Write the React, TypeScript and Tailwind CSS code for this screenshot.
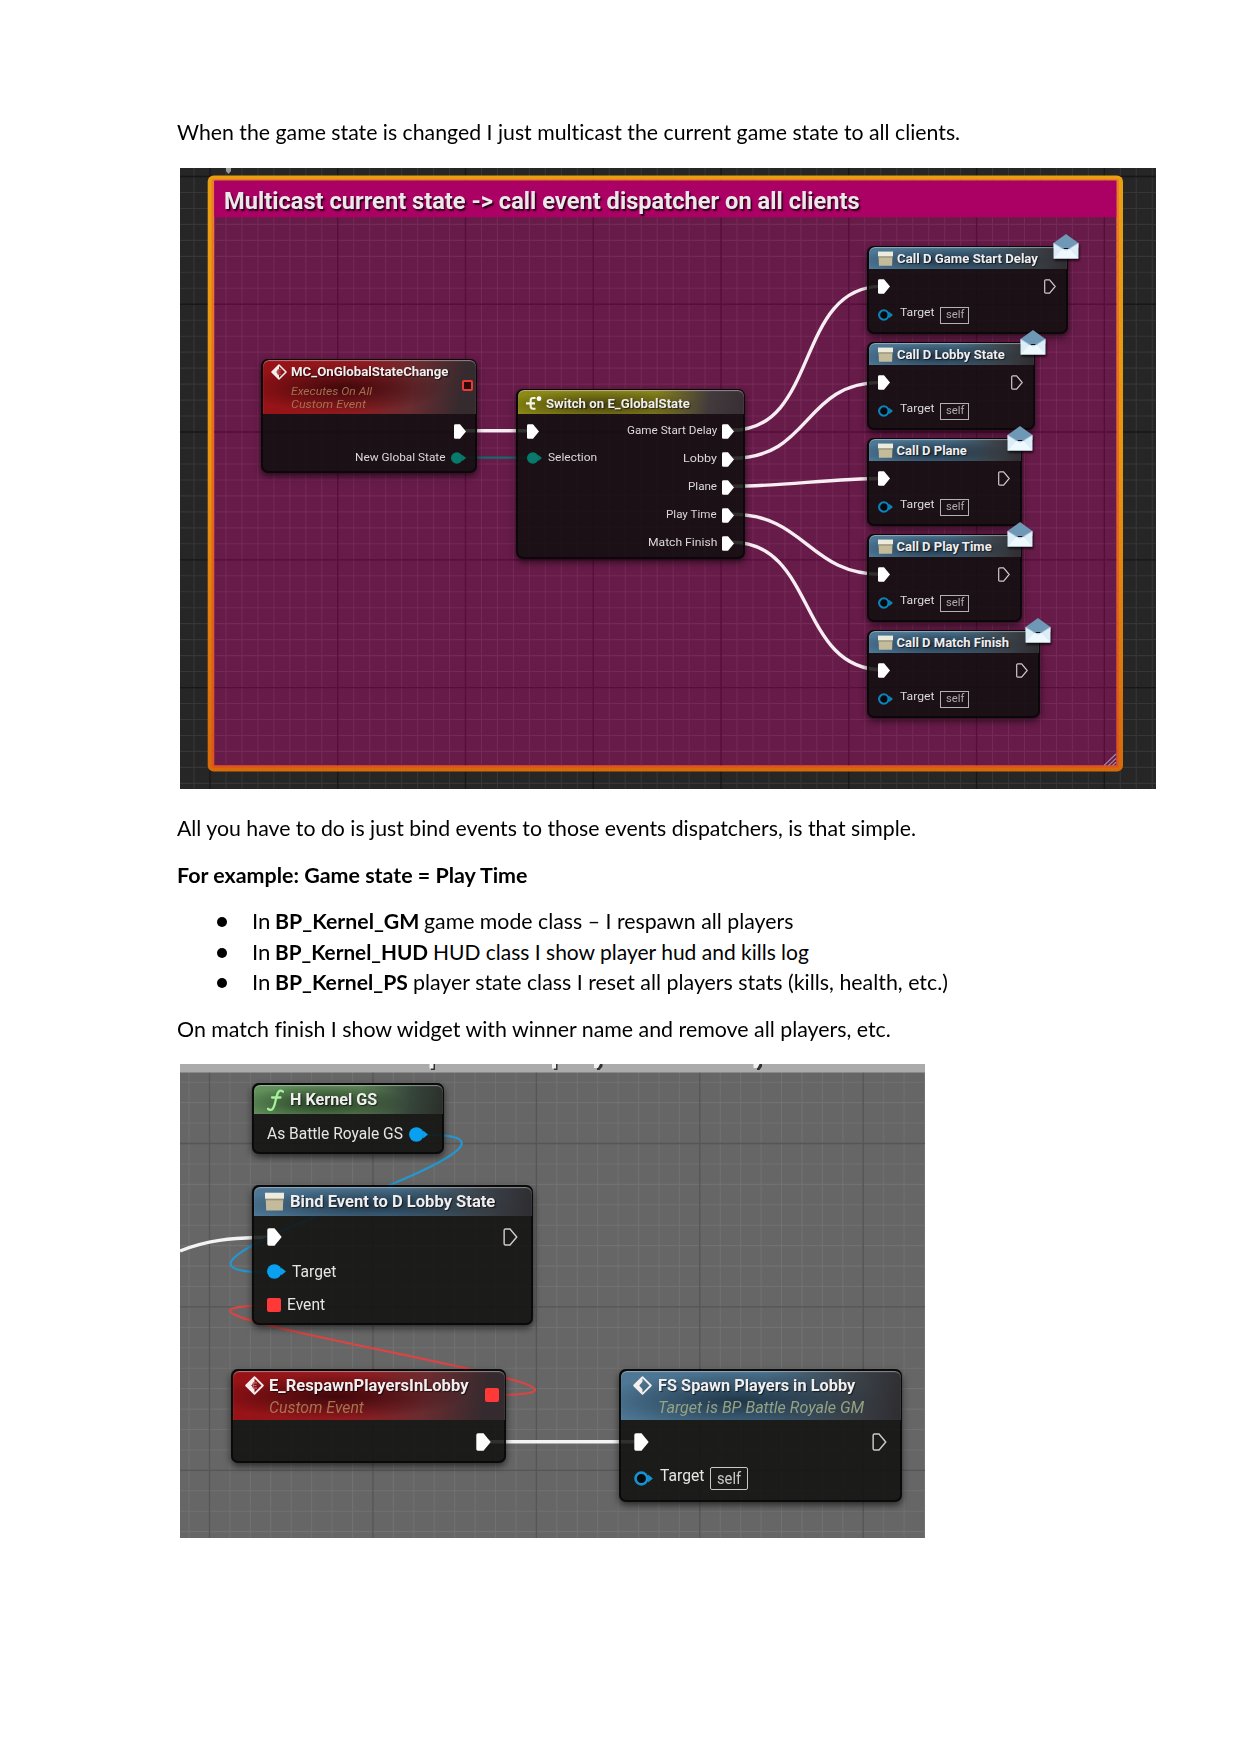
import React, { useLayoutEffect, useRef, useState } from "react";

/* Text condensed or widened horizontally to an exact width. */
function Fit({ w, className = "", children }: { w: number; className?: string; children: React.ReactNode }) {
  const ref = useRef<HTMLSpanElement>(null);
  const [k, setK] = useState(1);
  useLayoutEffect(() => {
    const measure = () => {
      if (ref.current) setK(w / ref.current.offsetWidth);
    };
    measure();
    document.fonts.ready.then(measure);
  }, [w]);
  return (
    <span className="inline-block shrink-0 whitespace-pre" style={{ width: w }}>
      <span ref={ref} className={`inline-block origin-left ${className}`} style={{ transform: `scaleX(${k})` }}>
        {children}
      </span>
    </span>
  );
}

function ExecPin({ open = false, big = false }: { open?: boolean; big?: boolean }) {
  return (
    <svg viewBox="0 0 12 15" className={`shrink-0 ${big ? "w-[15px] h-[18px]" : "w-[12px] h-[15px]"}`}>
      <path
        d={open ? "M.7 2Q.7.9 1.8.9H5.6L11.2 7.5 5.6 14.1H1.8Q.7 14.1.7 13Z" : "M0 1.6Q0 .2 1.4.2H6L12 7.5 6 14.8H1.4Q0 14.8 0 13.4Z"}
        fill={open ? "none" : "#fff"}
        stroke={open ? "#cfcacb" : "none"}
        strokeWidth="1.2"
      />
    </svg>
  );
}

function DataPin({ color, open = false, big = false }: { color: string; open?: boolean; big?: boolean }) {
  return (
    <svg viewBox="0 0 15 12" className={`shrink-0 ${big ? "w-[19px] h-[15px]" : "w-[15px] h-[12px]"}`}>
      <circle cx="5.8" cy="6" r={open ? 4.7 : 5.8} fill={open ? "#08090c" : color} stroke={open ? color : "none"} strokeWidth="2.1" />
      <path d="M11.2 2.800 15 6 11.200 9.200Z" fill={color} />
    </svg>
  );
}

function BoxIcon({ className }: { className: string }) {
  return (
    <svg viewBox="0 0 16 16" className={`shrink-0 ${className}`}>
      <path d="M.6 5.5H15.4L15 15.6H1Z" fill="#c3bb9c" />
      <path d="M.8 5.500H15.200V7H.8Z" fill="#968f75" />
      <path d="M0 .6H16V5.600H0Z" fill="#ecebdc" />
    </svg>
  );
}

function EventIcon({ className, call = false }: { className: string; call?: boolean }) {
  return (
    <svg viewBox="0 0 20 20" className={`shrink-0 ${className}`}>
      <path d="M10 1.2 18.8 10 10 18.8 1.2 10Z" fill="none" stroke="#f5eeee" strokeWidth="1.9" strokeLinejoin="round" />
      <path d="M10 1.2 1.2 10 10 18.8V14L6.6 10 10 6Z" fill="#f5eeee" />
      {!call && <path d="M8.400 7.200H12.600M8.400 10H12M8.400 12.800H12.600M8.600 7V13" stroke="#c06a6a" strokeWidth="1.200" fill="none" />}
    </svg>
  );
}

function SwitchIcon() {
  return (
    <svg viewBox="0 0 17 15" className="w-[17px] h-[15px] shrink-0">
      <path d="M9.5 2H7Q4.7 2 4.7 4.2V10.6Q4.7 12.7 7 12.7H9.5M0 7.4H9" stroke="#f3f3e6" strokeWidth="2.1" fill="none" />
      <circle cx="13" cy="2.700" r="2.400" fill="#fff" />
    </svg>
  );
}

function Envelope() {
  return (
    <svg viewBox="0 0 26 26" className="absolute -top-[12px] -right-[11px] w-[26px] h-[26px] overflow-visible drop-shadow-[1px_2px_1px_rgba(0,0,0,0.7)]">
      <path d="M13 0 25.5 9V14H.5V9Z" fill="#6f97b6" />
      <path d="M.5 9 10 15H16L25.5 9V24.5H.5Z" fill="#dcedf8" />
      <path d="M.5 24.5 10 14.6 13 16 16 14.6 25.5 24.5Z" fill="#eef8ff" />
      <path d="M.8 9.2 10 14.8 13 16.2 16 14.8 25.2 9.2" stroke="#a9c3d6" strokeWidth=".8" fill="none" />
    </svg>
  );
}

/* Graph-paper lines through (ox, oy): every eighth line is a major one. */
function Grid(p: { x: number; y: number; w: number; h: number; ox: number; oy: number; step: number; minor: string; major: string }) {
  const minor: string[] = [];
  const major: string[] = [];
  for (let i = -80; i <= 80; i++) {
    const gx = p.ox + i * p.step;
    const gy = p.oy + i * p.step;
    const out = i % 8 === 0 ? major : minor;
    if (gx > p.x && gx < p.x + p.w) out.push(`M${gx} ${p.y}v${p.h}`);
    if (gy > p.y && gy < p.y + p.h) out.push(`M${p.x} ${gy}h${p.w}`);
  }
  return (
    <g fill="none">
      <path d={minor.join("")} stroke={p.minor} strokeWidth="1.1" />
      <path d={major.join("")} stroke={p.major} strokeWidth="1.3" />
    </g>
  );
}

const SHELL =
  "absolute rounded-[7px] bg-[rgba(15,15,13,0.86)] shadow-[0_3px_7px_rgba(0,0,0,0.6),inset_0_0_0_2px_rgba(5,5,5,0.75)] text-[#dcd8da]";
const HEAD =
  "flex mx-[1.5px] rounded-t-[6px] shadow-[inset_0_1px_1px_rgba(220,225,230,0.5)]";
const TITLE = "font-bold text-[#f0eeef] [text-shadow:1px_1px_1px_rgba(0,0,0,0.6)]";

const BLUE =
  "bg-[radial-gradient(ellipse_50%_60%_at_42%_62%,rgba(18,34,48,0.75),rgba(18,34,48,0)),linear-gradient(100deg,#4e7896_0%,#496f8b_50%,#3c444b_80%,#2e2c30_100%)]";
const RED =
  "bg-[radial-gradient(ellipse_48%_45%_at_38%_52%,rgba(50,5,8,0.85),rgba(50,5,8,0)),linear-gradient(100deg,#981216_0%,#8e1a1f_45%,#6a2c30_70%,#352a2e_92%)]";
const OLIVE =
  "bg-[radial-gradient(ellipse_45%_60%_at_36%_62%,rgba(45,42,8,0.75),rgba(45,42,8,0)),linear-gradient(100deg,#8d8a14_0%,#85801c_60%,#423a3c_84%,#382e34_100%)]";
const GREEN =
  "bg-[radial-gradient(ellipse_45%_60%_at_36%_62%,rgba(22,42,20,0.8),rgba(22,42,20,0)),linear-gradient(100deg,#62925c_0%,#5a7f54_55%,#36453a_82%,#2a2e2a_100%)]";

function CallNode({ place, title, w }: { place: string; title: string; w: number }) {
  return (
    <div className={`${SHELL} ${place} h-[88px] text-[10px] leading-none`}>
      <div className={`${HEAD} ${BLUE} mt-[1px] h-[22px] items-center gap-[4px] pl-[9px]`}>
        <BoxIcon className="w-[15px] h-[15px]" />
        <Fit w={w} className={`${TITLE} text-[13px]`}>{title}</Fit>
      </div>
      <div className="flex h-[34px] items-center justify-between pl-[11px] pr-[12px]">
        <ExecPin />
        <ExecPin open />
      </div>
      <div className="flex h-[24px] items-center pl-[11px]">
        <DataPin color="#0d84bd" open />
        <div className="ml-[7px] mb-[4px]">
          <Fit w={34}>Target</Fit>
        </div>
        <div className="ml-[6px] flex h-[17px] w-[29px] items-center justify-center border border-[#b5b0b2] text-[#b0abae]">
          <Fit w={18}>self</Fit>
        </div>
      </div>
      <Envelope />
    </div>
  );
}

const OUTPUTS: [string, number][] = [
  ["Game Start Delay", 90],
  ["Lobby", 34],
  ["Plane", 29],
  ["Play Time", 51],
  ["Match Finish", 69],
];

function MulticastGraph() {
  return (
    <div className="relative h-[621px] w-[976px] overflow-hidden bg-[#262626] font-['Roboto',sans-serif]">
      <svg viewBox="180 168 976 621" className="absolute inset-0 h-full w-full">
        <defs>
          <linearGradient id="frame" x1="0" y1="0" x2="0" y2="1">
            <stop offset="0" stopColor="#e9a00f" />
            <stop offset=".5" stopColor="#e8940c" />
            <stop offset="1" stopColor="#d66a08" />
          </linearGradient>
          <linearGradient id="frameIn" x1="0" y1="0" x2="0" y2="1">
            <stop offset="0" stopColor="#ef7c2c" />
            <stop offset="1" stopColor="#dc5420" />
          </linearGradient>
        </defs>
        <Grid x={180} y={168} w={976} h={621} ox={210} oy={176.5} step={15.97} minor="#363636" major="#171717" />
        <path d="M226 168H231V171L228.5 174 226 171Z" fill="#9a9a9a" />
        <rect x="207.7" y="175.5" width="915.3" height="596" rx="6" fill="url(#frame)" />
        <rect x="211.5" y="178.7" width="907.5" height="589" rx="2" fill="url(#frameIn)" />
        <rect x="214.3" y="180.7" width="902" height="584.5" fill="#671b48" />
        <Grid x={214.3} y={180.7} w={902} h={584.5} ox={210} oy={176.5} step={15.97} minor="#752957" major="#560e3b" />
        <rect x="214.3" y="180.700" width="902" height="36.600" fill="#ab0064" />
        <path d="M1104 765.500 1116 754M1108.500 765.500 1116 758.500M1112.500 765.500 1116 762.200" stroke="#a9869a" strokeWidth="1.200" />
        <g fill="none" stroke="#f7eef3" strokeWidth="3.400">
          <path d="M462 430.700H530" />
          <path d="M732 430.300C820 430.300 794 286.400 882 286.400" />
          <path d="M732 458.300C812 458.300 802 382.400 882 382.400" />
          <path d="M732 486.300C782 486.300 832 478.500 882 478.500" />
          <path d="M732 514.300C806 514.300 808 574.300 882 574.300" />
          <path d="M732 542.200C816 542.200 798 669.700 882 669.700" />
        </g>
        <path d="M462 457.600H530" stroke="#17686f" strokeWidth="2.200" />
      </svg>

      <div className="absolute left-[44px] top-[17.500px] text-[24.500px] font-bold leading-[30px] text-[#ece8ea]">
        <Fit w={636} className="[text-shadow:1.5px_2px_1.5px_rgba(0,0,0,0.8)]">
          {"Multicast current state -> call event dispatcher on all clients"}
        </Fit>
      </div>

      <div className={`${SHELL} left-[81px] top-[190.500px] h-[114px] w-[216px] text-[10px] leading-none`}>
        <div className={`${HEAD} ${RED} mt-[1px] h-[54px] items-start gap-[4px] pl-[8px] pt-[4px]`}>
          <EventIcon className="h-[16px] w-[16px]" />
          <div className="flex flex-col text-[#a3714f]">
            <Fit w={158} className={`${TITLE} text-[13px] leading-[16px]`}>MC_OnGlobalStateChange</Fit>
            <div className="mt-[5px] leading-[13px] italic">
              <Fit w={81}>Executes On All</Fit>
            </div>
            <div className="leading-[13px] italic">
              <Fit w={75}>Custom Event</Fit>
            </div>
          </div>
          <div className="ml-[9px] mt-[16px] h-[11px] w-[11px] rounded-[2px] border-[2.500px] border-[#ea3a36] bg-[#2a0808]" />
        </div>
        <div className="flex h-[35px] items-center justify-end pr-[11px]">
          <ExecPin />
        </div>
        <div className="flex h-[19px] items-center justify-end gap-[5px] pr-[11px]">
          <Fit w={91}>New Global State</Fit>
          <DataPin color="#087a6c" />
        </div>
      </div>

      <div className={`${SHELL} left-[336px] top-[221px] h-[170px] w-[229px] text-[10px] leading-none`}>
        <div className={`${HEAD} ${OLIVE} mt-[1px] h-[24px] items-center gap-[3px] pl-[8px] pt-[2px]`}>
          <SwitchIcon />
          <Fit w={144} className={`${TITLE} text-[13px]`}>Switch on E_GlobalState</Fit>
        </div>
        <div className="flex justify-between pl-[11px] pr-[11px] pt-[3px]">
          <div>
            <div className="flex h-[28px] items-center">
              <ExecPin />
            </div>
            <div className="flex h-[26px] items-center gap-[6px]">
              <DataPin color="#087a6c" />
              <Fit w={49}>Selection</Fit>
            </div>
          </div>
          <div>
            {OUTPUTS.map(([name, w]) => (
              <div key={name} className="flex h-[28px] items-center justify-end gap-[5px]">
                <Fit w={w}>{name}</Fit>
                <ExecPin />
              </div>
            ))}
          </div>
        </div>
      </div>

      <CallNode place="left-[687px] top-[78px] w-[201px]" title="Call D Game Start Delay" w={141} />
      <CallNode place="left-[687px] top-[174px] w-[168px]" title="Call D Lobby State" w={108} />
      <CallNode place="left-[687px] top-[270px] w-[155px]" title="Call D Plane" w={70} />
      <CallNode place="left-[687px] top-[366px] w-[155px]" title="Call D Play Time" w={95} />
      <CallNode place="left-[687px] top-[462px] w-[173px]" title="Call D Match Finish" w={113} />
    </div>
  );
}

function BindGraph() {
  return (
    <div className="relative h-[474px] w-[745px] overflow-hidden bg-[#666666] font-['Roboto',sans-serif]">
      <svg viewBox="180 1064 745 474" className="absolute inset-0 h-full w-full">
        <Grid x={180} y={1064} w={745} h={474} ox={209.5} oy={1143.5} step={20.43} minor="#717171" major="#565656" />
        <rect x="180" y="1064" width="745" height="8.500" fill="#ababab" />
        <g fill="#333333">
          <path d="M431 1064H435V1070H431ZM554 1064H557.500V1070H554Z" />
          <path d="M597 1070H599.500L602.500 1066.500V1064H597ZM757 1070H759.500L762 1066.500V1064H757Z" />
        </g>
        <g fill="#f2f2f2">
          <path d="M429.500 1064H433.500V1068.500H429.500ZM552 1064H556V1068.500H552Z" />
          <path d="M594 1068H598L600 1064H594ZM753.500 1068H757.500L759.500 1064H753.500Z" />
        </g>
        <path d="M180 1251C205 1241 230 1237.300 270 1237.300M488 1441.700H640" fill="none" stroke="#f4f4f4" strokeWidth="3.400" />
        <path d="M424 1134.700C600 1134.700 93 1272.300 268 1272.300" fill="none" stroke="#2497d0" strokeWidth="2.200" />
        <path d="M492 1395C702 1395 63 1305.700 273 1305.700" fill="none" stroke="#d84545" strokeWidth="2.200" />
      </svg>

      <div className={`${SHELL} left-[72px] top-[19px] h-[71px] w-[192px] text-[16px] leading-none`}>
        <div className={`${HEAD} ${GREEN} mt-[2px] h-[29px] items-center pl-[13px]`}>
          <svg viewBox="0 0 17 22" className="h-[22px] w-[17px] shrink-0">
            <path d="M16 2.600Q13 .2 11 3.600 10 5.500 8.500 12 7 19 5 20.500 3 21.500 1 19.800M5 8.500H13.500" fill="none" stroke="#a5f09a" strokeWidth="2.300" strokeLinecap="round" />
          </svg>
          <div className="ml-[6px]">
            <Fit w={87} className={`${TITLE} text-[16px]`}>H Kernel GS</Fit>
          </div>
        </div>
        <div className="flex h-[40px] items-center gap-[6px] pl-[15px] text-[#e6e6e6]">
          <Fit w={136}>As Battle Royale GS</Fit>
          <DataPin color="#0aa0f0" big />
        </div>
      </div>

      <div className={`${SHELL} left-[72px] top-[121px] h-[140px] w-[281px] text-[16px] leading-none`}>
        <div className={`${HEAD} ${BLUE} mt-[2px] h-[29px] items-center gap-[6px] pl-[11px]`}>
          <BoxIcon className="h-[19px] w-[19px]" />
          <Fit w={205} className={`${TITLE} text-[16px]`}>Bind Event to D Lobby State</Fit>
        </div>
        <div className="flex h-[42px] items-center justify-between pl-[15px] pr-[15px]">
          <ExecPin big />
          <ExecPin open big />
        </div>
        <div className="flex h-[27px] items-center gap-[6px] pl-[15px] text-[#e6e6e6]">
          <DataPin color="#0aa0f0" big />
          <Fit w={44}>Target</Fit>
        </div>
        <div className="flex h-[40px] items-center gap-[6px] pl-[15px] text-[#e6e6e6]">
          <div className="h-[14px] w-[14px] rounded-[2px] bg-[#ff3838]" />
          <Fit w={38}>Event</Fit>
        </div>
      </div>

      <div className={`${SHELL} left-[51px] top-[305px] h-[94px] w-[275px] text-[16px] leading-none`}>
        <div className={`${HEAD} ${RED} mt-[2px] h-[49px] items-start pl-[12px] pt-[5px]`}>
          <EventIcon className="h-[19px] w-[19px]" />
          <div className="ml-[5px] flex flex-col">
            <Fit w={199} className={`${TITLE} text-[16px] leading-[19px]`}>E_RespawnPlayersInLobby</Fit>
            <div className="mt-[3px] leading-[19px] italic text-[#a3744f]">
              <Fit w={95}>Custom Event</Fit>
            </div>
          </div>
          <div className="ml-[17px] mt-[12px] h-[14px] w-[14px] rounded-[2px] bg-[#ff3838]" />
        </div>
        <div className="flex h-[43px] items-center justify-end pr-[15px]">
          <ExecPin big />
        </div>
      </div>

      <div className={`${SHELL} left-[439px] top-[305px] h-[133px] w-[283px] text-[16px] leading-none`}>
        <div className={`${HEAD} ${BLUE} mt-[2px] h-[49px] items-start pl-[12px] pt-[5px]`}>
          <EventIcon className="h-[19px] w-[19px]" call />
          <div className="ml-[6px] flex flex-col">
            <Fit w={197} className={`${TITLE} text-[16px] leading-[19px]`}>FS Spawn Players in Lobby</Fit>
            <div className="mt-[3px] leading-[19px] italic text-[#94a283]">
              <Fit w={206}>Target is BP Battle Royale GM</Fit>
            </div>
          </div>
        </div>
        <div className="flex h-[43px] items-center justify-between px-[15px]">
          <ExecPin big />
          <ExecPin open big />
        </div>
        <div className="flex h-[31px] items-center pl-[15px] text-[#e6e6e6]">
          <DataPin color="#1592d2" open big />
          <div className="mb-[5px] ml-[7px]">
            <Fit w={44}>Target</Fit>
          </div>
          <div className="ml-[6px] flex h-[23px] w-[38px] items-center justify-center rounded-[2px] border border-[#c8c8c8] text-[#c8c8c8]">
            <Fit w={24}>self</Fit>
          </div>
        </div>
      </div>
    </div>
  );
}

const ITEMS: { name: string; nameW: number; rest: string; restW: number }[] = [
  { name: "BP_Kernel_GM", nameW: 144, rest: "game mode class – I respawn all players", restW: 369 },
  { name: "BP_Kernel_HUD", nameW: 153, rest: "HUD class I show player hud and kills log", restW: 376 },
  { name: "BP_Kernel_PS", nameW: 133, rest: "player state class I reset all players stats (kills, health, etc.)", restW: 535 },
];

export default function App() {
  return (
    <main className="h-[1755px] w-[1242px] overflow-hidden bg-white pt-[117px] font-['Lato',sans-serif] text-[21px] leading-[30px] text-black [font-variant-ligatures:none]">
      <p className="h-[51px] pl-[177px]">
        <Fit w={783}>When the game state is changed I just multicast the current game state to all clients.</Fit>
      </p>
      <div className="pl-[180px]">
        <MulticastGraph />
      </div>
      <div className="pl-[177px] pt-[24px]">
        <p className="h-[47px]">
          <Fit w={739}>All you have to do is just bind events to those events dispatchers, is that simple.</Fit>
        </p>
        <p className="h-[46px] font-bold">
          <Fit w={351}>For example: Game state = Play Time</Fit>
        </p>
        <ul className="h-[108px]">
          {ITEMS.map((it) => (
            <li key={it.name} className="flex h-[30.500px] items-start pl-[40px]">
              <span className="mt-[11px] h-[10px] w-[10px] rounded-full bg-black" />
              <span className="ml-[25px] flex gap-[5px]">
                <Fit w={18}>In</Fit>
                <Fit w={it.nameW} className="font-bold">{it.name}</Fit>
                <Fit w={it.restW}>{it.rest}</Fit>
              </span>
            </li>
          ))}
        </ul>
        <p className="h-[50px]">
          <Fit w={714}>On match finish I show widget with winner name and remove all players, etc.</Fit>
        </p>
      </div>
      <div className="pl-[180px]">
        <BindGraph />
      </div>
    </main>
  );
}
